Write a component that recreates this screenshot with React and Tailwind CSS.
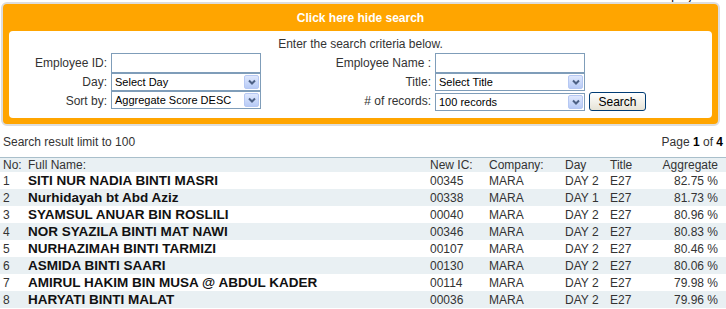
import React from 'react';

const rows = [
  ['1', 'SITI NUR NADIA BINTI MASRI', '00345', 'MARA', 'DAY 2', 'E27', '82.75 %'],
  ['2', 'Nurhidayah bt Abd Aziz', '00338', 'MARA', 'DAY 1', 'E27', '81.73 %'],
  ['3', 'SYAMSUL ANUAR BIN ROSLILI', '00040', 'MARA', 'DAY 2', 'E27', '80.96 %'],
  ['4', 'NOR SYAZILA BINTI MAT NAWI', '00346', 'MARA', 'DAY 2', 'E27', '80.83 %'],
  ['5', 'NURHAZIMAH BINTI TARMIZI', '00107', 'MARA', 'DAY 2', 'E27', '80.46 %'],
  ['6', 'ASMIDA BINTI SAARI', '00130', 'MARA', 'DAY 2', 'E27', '80.06 %'],
  ['7', 'AMIRUL HAKIM BIN MUSA @ ABDUL KADER', '00114', 'MARA', 'DAY 2', 'E27', '79.98 %'],
  ['8', 'HARYATI BINTI MALAT', '00036', 'MARA', 'DAY 2', 'E27', '79.96 %'],
];

// XP style dropdown
const Select = ({ value, className = '' }) => (
  <div className={`w-[150px] h-[18px] border border-[#7f9db9] bg-white flex items-center justify-between pl-[3px] pr-[1px] ${className}`}>
    <span className="text-black text-[11px] leading-none">{value}</span>
    <span className="w-[15px] h-[14px] rounded-[2px] border border-[#b6c8f3] bg-gradient-to-b from-[#dfe8fd] to-[#b8cbf6] flex items-center justify-center">
      <svg width="8" height="6" viewBox="0 0 8 6">
        <path d="M1 1.5 L4 4.5 L7 1.5" fill="none" stroke="#4d6185" strokeWidth="2" />
      </svg>
    </span>
  </div>
);

const Label = ({ children }) => (
  <div className="text-right pr-[4px] text-[#333]">{children}</div>
);

export default function App() {
  return (
    <div className="w-[726px] h-[309px] overflow-hidden bg-white font-['Liberation_Sans',Arial,sans-serif] text-[12px] text-[#333]">
      {/* cut off text above the panel */}
      <div className="h-[2px] overflow-hidden">
        <div className="ml-[654px] -mt-[11px] leading-[14px] text-black">Display</div>
      </div>

      {/* search panel */}
      <div className="ml-[1px] w-[719px] border-2 border-[#dddddd] rounded-[6px] bg-[#ffa500]">
        <div className="h-[27px] flex items-center justify-center text-white font-bold">
          Click here hide search
        </div>
        <div className="mx-[6px] mb-[6px] h-[87px] bg-white rounded-[4px] pt-[6px]">
          <div className="h-[14px] leading-[14px] text-center">Enter the search criteria below.</div>
          <div className="mt-[2px] grid grid-cols-[102px_150px_174px_150px_auto]">
            {/* row 1 */}
            <div className="h-[20px] flex items-center justify-end"><Label>Employee ID:</Label></div>
            <div className="h-[20px] border border-[#7f9db9] bg-white" />
            <div className="h-[20px] flex items-center justify-end"><Label>Employee Name :</Label></div>
            <div className="h-[20px] border border-[#7f9db9] bg-white" />
            <div />
            {/* row 2 */}
            <div className="h-[18px] flex items-center justify-end"><Label>Day:</Label></div>
            <Select value="Select Day" />
            <div className="h-[18px] flex items-center justify-end"><Label>Title:</Label></div>
            <Select value="Select Title" />
            <div />
            {/* row 3 */}
            <div className="h-[20px] flex items-center justify-end"><Label>Sort by:</Label></div>
            <Select value="Aggregate Score DESC" />
            <div className="h-[20px] flex items-center justify-end"><Label>#&nbsp;of records:</Label></div>
            <Select value="100 records" className="mt-[2px]" />
            <div className="pl-[4px] pt-[1px]">
              <button className="w-[57px] h-[19px] rounded-[3px] border border-[#003c74] bg-gradient-to-b from-[#ffffff] to-[#e6e3d6] text-black text-[12px] leading-none">
                Search
              </button>
            </div>
          </div>
        </div>
      </div>

      {/* results */}
      <div className="mt-[9px] h-[14px] leading-[14px] flex justify-between pl-[3px] pr-[3px]">
        <span>Search result limit to 100</span>
        <span>Page <b className="text-black">1</b> of <b className="text-black">4</b></span>
      </div>

      <div className="mt-[8px] border-t border-[#a9bfcb]">
        <div className="h-[14px] bg-[#e9f0f3] grid grid-cols-[25px_402px_59px_76px_45px_50px_69px] items-center leading-none">
          <div className="pl-[3px]">No:</div>
          <div className="pl-[3px]">Full Name:</div>
          <div className="pl-[3px]">New IC:</div>
          <div className="pl-[3px]">Company:</div>
          <div className="pl-[3px]">Day</div>
          <div className="pl-[3px]">Title</div>
          <div className="text-right pr-[8px]">Aggregate</div>
        </div>
        {rows.map((r, i) => (
          <div
            key={r[0]}
            className={`h-[17px] grid grid-cols-[25px_402px_59px_76px_45px_50px_69px] items-center leading-none ${i % 2 === 1 ? 'bg-[#e9f0f3]' : 'bg-white'}`}
          >
            <div className="pl-[3px]">{r[0]}</div>
            <div className="pl-[3px] font-bold text-[13.5px] text-[#111]">{r[1]}</div>
            <div className="pl-[3px]">{r[2]}</div>
            <div className="pl-[3px]">{r[3]}</div>
            <div className="pl-[3px]">{r[4]}</div>
            <div className="pl-[3px]">{r[5]}</div>
            <div className="text-right pr-[8px]">{r[6]}</div>
          </div>
        ))}
      </div>
    </div>
  );
}
